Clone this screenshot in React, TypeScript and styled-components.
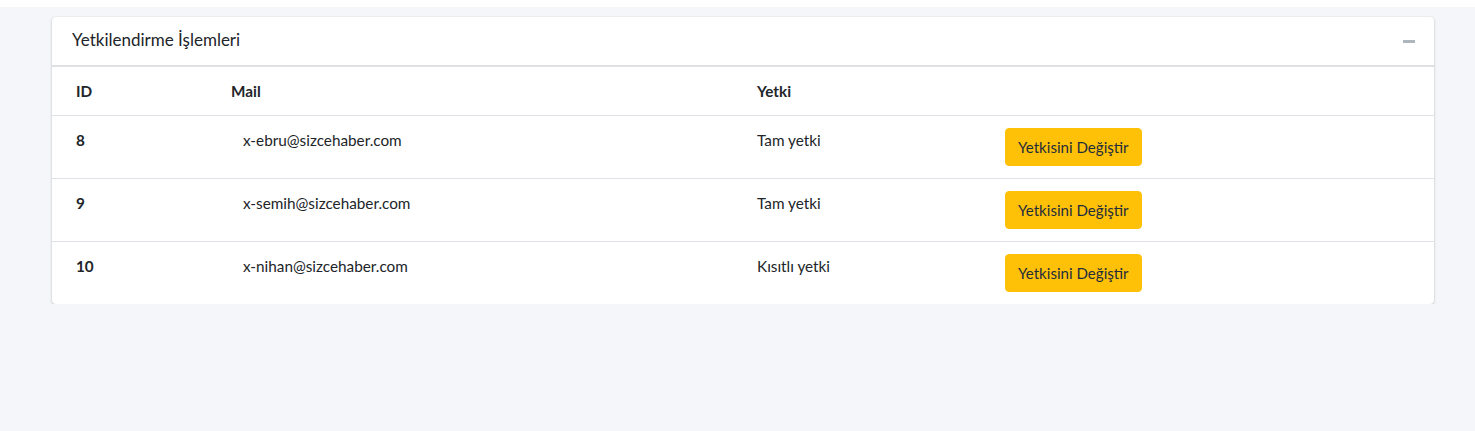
import React from "react";
import styled, { createGlobalStyle } from "styled-components";

const Global = createGlobalStyle`
  html, body { margin: 0; padding: 0; }
  body {
    background: #f4f6f9;
    font-family: "Source Sans Pro", Lato, "Liberation Sans", sans-serif;
    color: #212529;
    font-size: 15.3px;
  }
`;

const TopStrip = styled.div`
  height: 7px;
  background: #ffffff;
`;

const Content = styled.div`
  padding: 10px 41px 0 52px;
`;

const Card = styled.section`
  background: #fff;
  border-radius: 4px;
  box-shadow: 0 0 1px rgba(0, 0, 0, 0.125), 0 1px 3px rgba(0, 0, 0, 0.2);
  overflow: hidden;
`;

const CardHeader = styled.header`
  height: 48px;
  display: flex;
  align-items: center;
  justify-content: space-between;
  padding: 0 19px 0 20px;
  border-bottom: 1px solid rgba(0, 0, 0, 0.125);
`;

const Title = styled.h3`
  margin: 0;
  font-size: 17px;
  font-weight: 400;
  line-height: 1.2;
  color: #212529;
  position: relative;
  top: -1px;
`;

const ToolButton = styled.button`
  width: 12px;
  height: 12px;
  padding: 0;
  border: 0;
  background: transparent;
  display: flex;
  align-items: center;
  justify-content: center;
  cursor: pointer;
  &::before {
    content: "";
    display: block;
    width: 12px;
    height: 3px;
    background: #adb5bd;
  }
`;

const Row = styled.div<{ $head?: boolean }>`
  display: grid;
  grid-template-columns: 155px 526px 248px 1fr;
  padding-left: 12px;
  border-top: 1px solid #dee2e6;
  height: ${(p) => (p.$head ? 48 : 62)}px;
`;

const Cell = styled.div<{ $head?: boolean; $indent?: boolean }>`
  padding: 12px 12px 12px ${(p) => (p.$indent ? 24 : 12)}px;
  line-height: 24px;
  font-size: 15.3px;
  font-weight: ${(p) => (p.$head ? 700 : 400)};
`;

const IdCell = styled(Cell)`
  font-weight: 700;
`;

const WarnButton = styled.button`
  height: 38px;
  padding: 6px 12px;
  border: 1px solid #ffc107;
  border-radius: 4px;
  background: #ffc107;
  color: #1f2d3d;
  font-family: inherit;
  font-size: 15.1px;
  line-height: 24px;
  cursor: pointer;
`;

const rows = [
  { id: 8, mail: "x-ebru@sizcehaber.com", role: "Tam yetki" },
  { id: 9, mail: "x-semih@sizcehaber.com", role: "Tam yetki" },
  { id: 10, mail: "x-nihan@sizcehaber.com", role: "Kısıtlı yetki" },
];

export default function App() {
  return (
    <>
      <Global />
      <TopStrip />
      <Content>
        <Card>
          <CardHeader>
            <Title>Yetkilendirme İşlemleri</Title>
            <ToolButton aria-label="Küçült" />
          </CardHeader>
          <Row $head>
            <Cell $head>ID</Cell>
            <Cell $head>Mail</Cell>
            <Cell $head>Yetki</Cell>
            <Cell $head />
          </Row>
          {rows.map((r) => (
            <Row key={r.id}>
              <IdCell>{r.id}</IdCell>
              <Cell $indent>{r.mail}</Cell>
              <Cell>{r.role}</Cell>
              <Cell>
                <WarnButton>Yetkisini Değiştir</WarnButton>
              </Cell>
            </Row>
          ))}
        </Card>
      </Content>
    </>
  );
}
